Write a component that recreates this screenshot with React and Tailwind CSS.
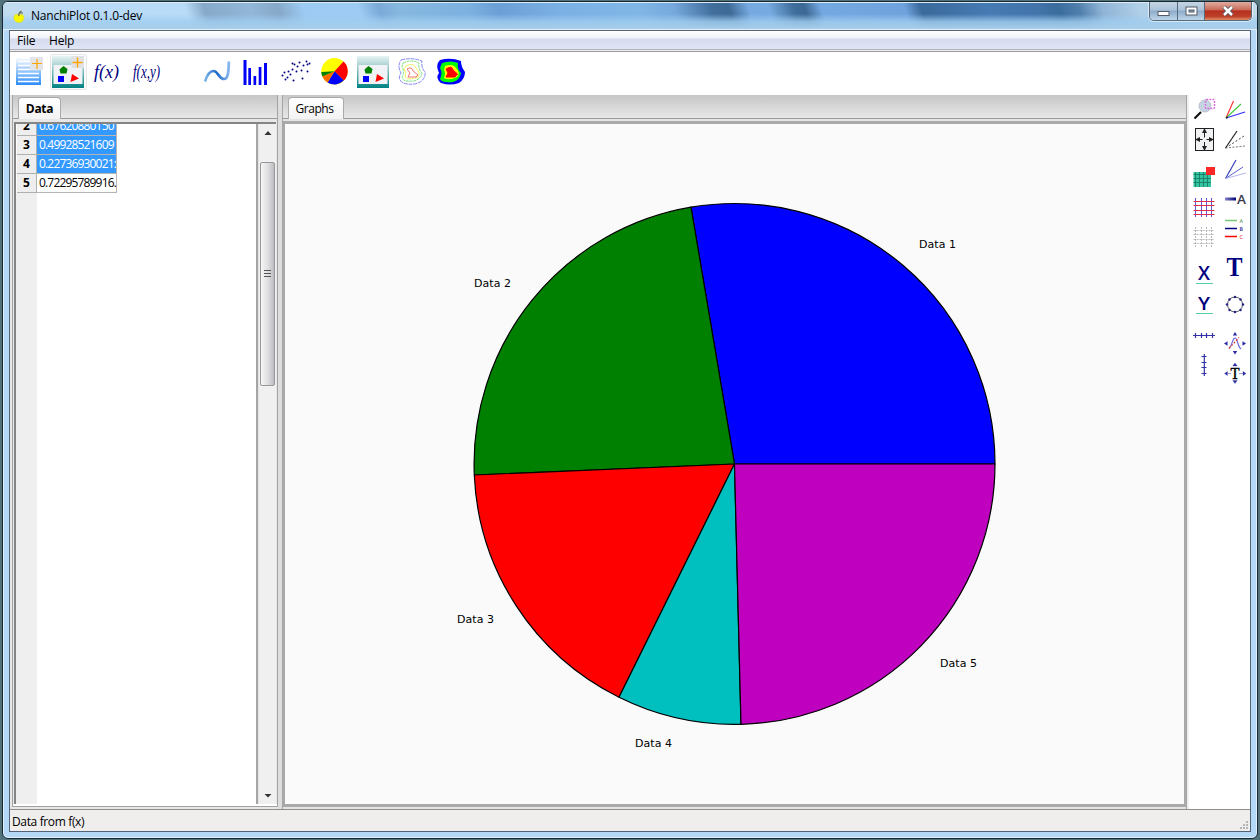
import React from 'react';

const uiFont = "font-['Open_Sans','Noto_Sans',sans-serif]";

/* Icons share one drawing space; x and y are the corner of each icon's view. */
function Icon({ x, y, w = 24, h = 24, className = '', children }) {
  return (
    <svg className={'block shrink-0 ' + className} width={w} height={h} viewBox={`${x} ${y} ${w} ${h}`}>
      {children}
    </svg>
  );
}

function ImageShapes({ x, y, plus }) {
  return (
    <g>
      <rect x={x} y={y} width="32" height="32" fill="url(#tealPic)" />
      <rect x={x + 1.5} y={y + 9} width="29" height="19" fill="#f0f2f5" />
      <path d={`M${x + 7.5} ${y + 13.5}l4 -3.5l4 3l-1 4.500h-6z`} fill="#008000" />
      <rect x={x + 6} y={y + 20} width="6" height="6" fill="#00f" />
      <path d={`M${x + 20} ${y + 18}l7 4.500l-8.500 3.500z`} fill="#f00" />
      {plus && (
        <g>
          <rect x={x + 19.500} y={y} width="12.500" height="12" fill="#dfe1e3" />
          <path d={`M${x + 25.500} ${y + 1.500}v10M${x + 20.500} ${y + 6.500}h10`} stroke="#ffa500" strokeWidth="1.400" />
        </g>
      )}
    </g>
  );
}

function Toolbar() {
  const dots = [[282, 75], [284, 72], [287, 77], [288, 71], [290, 74], [292, 69], [293, 80], [294, 64], [296, 71], [297, 66], [299, 62], [301, 70], [302, 78], [303, 65], [306, 61], [307, 71], [307, 64], [309, 63], [285, 79], [292, 63]];
  return (
    <div className="h-[43px] shrink-0 bg-white flex items-start pl-[3px] pt-[2px]">
      <Icon x={13} y={54} w={36} h={38}>
        <defs>
          <linearGradient id="sheetBlue" x1="0" y1="0" x2="0" y2="1"><stop stopColor="#f8fbff" /><stop offset="1" stopColor="#2b8cfa" /></linearGradient>
          <linearGradient id="tealPic" x1="0" y1="0" x2="0" y2="1"><stop stopColor="#e8f4f4" /><stop offset=".3" stopColor="#a9d1d1" /><stop offset="1" stopColor="#008282" /></linearGradient>
        </defs>
        <rect x="16" y="58" width="25" height="27" fill="url(#sheetBlue)" />
        <path d="M18 61.500h21M18 65.500h21M18 69.500h21M18 73.500h21M18 77.500h21M18 81.500h21" stroke="#fff" strokeWidth="1.300" />
        <rect x="30" y="57" width="13" height="13" fill="#e2e4e7" />
        <path d="M37 59v10M32 63.500h10" stroke="#ffa500" strokeWidth="1.200" />
      </Icon>
      <Icon x={49} y={54} w={39} h={38}>
        <rect x="50.500" y="54.500" width="36" height="35" rx="2" fill="#fafafa" stroke="#e5e5e5" />
        <ImageShapes x={52} y={56} plus />
      </Icon>
      <Icon x={88} y={54} w={39} h={38}>
        <text x="94" y="78" textLength="25" lengthAdjust="spacingAndGlyphs" fill="#000080" fontFamily="Liberation Serif, serif" fontStyle="italic" fontSize="19">f(x)</text>
      </Icon>
      <Icon x={127} y={54} w={73} h={38}>
        <text x="133" y="78" textLength="27" lengthAdjust="spacingAndGlyphs" fill="#000080" fontFamily="Liberation Serif, serif" fontStyle="italic" fontSize="19">f(x,y)</text>
      </Icon>
      <Icon x={200} y={54} w={37} h={38}>
        <defs><linearGradient id="wave"><stop stopColor="#7fb5e8" /><stop offset=".5" stopColor="#1b69cc" /><stop offset="1" stopColor="#86b6ed" /></linearGradient></defs>
        <path d="M205 81.500C207 75 210 71 213.500 71C218 71 219 79 224 79C228.500 79 228.800 70 228.800 61.500" fill="none" stroke="url(#wave)" strokeWidth="2.700" />
      </Icon>
      <Icon x={237} y={54} w={39} h={38}>
        <g fill="#0000f5"><rect x="243.500" y="60" width="3" height="25" /><rect x="248.300" y="68" width="2.700" height="17" /><rect x="253.500" y="76" width="2.700" height="9" /><rect x="258.700" y="67" width="2.700" height="18" /><rect x="264" y="63" width="3" height="22" /></g>
      </Icon>
      <Icon x={276} y={54} w={38} h={38}>
        {dots.map(([x, y]) => <circle key={x + '-' + y} cx={x + 0.5} cy={y + 0.5} r="1" fill="#000080" />)}
      </Icon>
      <Icon x={314} y={54} w={41} h={38}>
        <circle cx="334.500" cy="71.300" r="13.200" fill="#ff0" />
        <path d="M334.500 71.300L343.500 61.500A13.200 13.200 0 0 1 343.800 80.600z" fill="#f00" />
        <path d="M334.500 71.300L343.800 80.600A13.200 13.200 0 0 1 327.500 82.500z" fill="#00f" />
        <path d="M334.500 71.300L327.500 82.500A13.200 13.200 0 0 1 322.300 76.500z" fill="#ff6a00" />
        <path d="M334.500 71.300L322.300 76.500A13.200 13.200 0 0 1 321.300 72z" fill="#008000" />
      </Icon>
      <Icon x={355} y={54} w={40} h={38}><ImageShapes x={357} y={56} /></Icon>
      <Icon x={395} y={54} w={38} h={38}>
        <g fill="none" strokeWidth=".9">
          <path d="M401 60Q412 57 422 61Q421 68 425 72Q426 78 420 82Q413 86 403 83Q397 79 401 73Q397 66 401 60z" stroke="#7777f2" strokeDasharray="4 .8" />
          <path d="M403 63Q412 59 419 63Q418 69 422 73Q421 79 414 81Q402 82 402 77Q405 72 402 67z" stroke="#6ddd73" strokeDasharray="3 .7" />
          <path d="M406 66Q414 62 416 68Q421 73 418 77Q409 81 405 77Q407 72 404 69z" stroke="#f2ee54" />
          <path d="M407 69Q412 66 413 71L418 75L416 77L408 77L410 73z" stroke="#f06565" />
        </g>
      </Icon>
      <Icon x={433} y={54} w={38} h={38}>
        <path d="M440 60Q451 57 461 61Q461 67 465 72Q465 79 459 83Q450 86 441 83Q435 78 439 73Q435 65 440 60z" fill="#00f" />
        <path d="M442 63Q451 60 458 63Q457 69 461 73Q460 80 453 82Q442 83 440 79Q443 73 440 68z" fill="#0f0" />
        <path d="M445 66Q453 63 456 68Q461 73 457 77Q449 81 444 78Q446 73 444 70z" fill="#ff0" />
        <path d="M446 69Q452 65 453 70L457.500 74L455 77L446 77L448 73z" fill="#f00" stroke="#f00" />
      </Icon>
    </div>
  );
}

function DataTable() {
  const rows = [
    { n: 2, v: '0.67620880150', selected: true, height: 'h-[12px]', text: 'leading-[18px] -mt-[7px]' },
    { n: 3, v: '0.49928521609', selected: true, height: 'h-[19px]', text: 'leading-[18px]' },
    { n: 4, v: '0.22736930021:', selected: true, height: 'h-[19px]', text: 'leading-[18px]' },
    { n: 5, v: '0.72295789916.', selected: false, height: 'h-[19px]', text: 'leading-[18px]' },
  ];
  return (
    <div className="w-[240px] shrink-0 h-full bg-white flex flex-col overflow-hidden text-[12px]">
      {rows.map((r) => (
        <div key={r.n} className={'flex shrink-0 ' + r.height}>
          <div className="w-[20px] ml-px bg-[#eeeeee] border-r border-b border-[#b0b0b0] overflow-hidden text-center font-bold"><div className={r.text}>{r.n}</div></div>
          <div className={'w-[80px] border-r border-b border-[#b5b5b5] overflow-hidden pl-[2px] whitespace-nowrap ' + (r.selected ? 'bg-[#3399ff] text-white' : 'bg-white text-black')}>
            <div className={'tracking-[-0.83px] ' + r.text}>{r.v}</div>
          </div>
        </div>
      ))}
      <div className="w-[21px] flex-1 bg-[#efefef]" />
    </div>
  );
}

function Scrollbar() {
  return (
    <div className="w-[18px] shrink-0 h-full bg-[#f0f0f0] border-l border-[#e4e4e4] flex flex-col items-center">
      <svg width="16" height="38" className="block shrink-0"><path d="M4.500 11L8 7L11.500 11z" fill="#333" /></svg>
      <div className="w-[15px] h-[224px] shrink-0 rounded-[2px] border border-[#989898] bg-linear-to-r from-[#f6f6f6] via-[#e0e0e2] to-[#bdbec2] flex items-center justify-center">
        <svg className="-mt-[2px]" width="7" height="8"><path d="M0 1.500h7M0 4.500h7M0 7.500h7" stroke="#555" /></svg>
      </div>
      <div className="flex-1" />
      <svg width="16" height="14" className="block shrink-0"><path d="M4.500 4L11.500 4L8 7.500z" fill="#333" /></svg>
    </div>
  );
}

function PieChart() {
  const slices = [
    { end: [691, 207.2], start: [995, 464], color: '#0000ff' },
    { end: [474.300, 475], start: [691, 207.2], color: '#008000' },
    { end: [619, 697.200], start: [474.300, 475], color: '#ff0000' },
    { end: [741, 724.300], start: [619, 697.200], color: '#00bfbf' },
    { end: [995, 464], start: [741, 724.300], color: '#bf00bf' },
  ];
  const labels = [['Data 1', 919, 248], ['Data 2', 474, 287], ['Data 3', 457, 623], ['Data 4', 635, 747], ['Data 5', 940, 667]];
  return (
    <svg className="block" width="899" height="680" viewBox="285 124 899 680">
      {slices.map((s) => (
        <path key={s.color} d={`M734.500 464L${s.start[0]} ${s.start[1]}A260.500 260.500 0 0 0 ${s.end[0]} ${s.end[1]}z`} fill={s.color} stroke="#000" strokeWidth="1.200" strokeLinejoin="round" />
      ))}
      {labels.map(([t, x, y]) => <text key={t} x={x} y={y} fontFamily="DejaVu Sans, sans-serif" fontSize="11" textLength="37">{t}</text>)}
    </svg>
  );
}

function SideTools() {
  return (
    <div className="flex-1 flex pl-[3px]">
      <div className="w-[24px] flex flex-col mr-[7px]">
        <Icon x={1192} y={97} className="mt-[2px]">
          <circle cx="1205" cy="106" r="6" fill="#c5d3e2" stroke="#b9c2cc" />
          <path d="M1194.500 118.500L1201 112" stroke="#111" strokeWidth="2.200" />
          <rect x="1205.500" y="99.500" width="9" height="9" rx="1" fill="none" stroke="#d968dc" strokeWidth="1.400" strokeDasharray="1.800 1.200" />
        </Icon>
        <Icon x={1192} y={127} className="mt-[6px]">
          <rect x="1195.500" y="128.500" width="18" height="22" fill="#f0f2f4" stroke="#222" />
          <path d="M1204.500 129.500v8M1204.500 142v8M1196.500 139.500h6M1206.500 139.500h6" stroke="#222" />
          <path d="M1204.500 128l2.500 5h-5zM1204.500 151l2.500-5h-5zM1195 139.500l5-2.500v5zM1214 139.500l-5-2.500v5z" fill="#222" />
        </Icon>
        <Icon x={1192} y={165} className="mt-[14px]">
          <rect x="1193.500" y="172" width="17.500" height="15" fill="#33c4a0" />
          <path d="M1195.500 172v15M1199.500 172v15M1203.500 172v15M1207.500 172v15M1193.500 174.500h17.500M1193.500 178.500h17.500M1193.500 182.500h17.500" stroke="#16755f" strokeWidth=".8" />
          <rect x="1206" y="167" width="9" height="8" fill="#ff2828" />
        </Icon>
        <Icon x={1192} y={195} className="mt-[6px]">
          <path d="M1195.500 198v19M1201.500 198v19M1206.500 198v19M1211.500 198v19" stroke="#5a5ad8" />
          <path d="M1193.500 201.500h21M1193.500 205.500h21M1193.500 210.500h21M1193.500 214.500h21" stroke="#e0304f" strokeWidth="1.200" />
        </Icon>
        <Icon x={1192} y={225} className="mt-[6px]">
          <path d="M1195.500 227v20M1201.500 227v20M1206.500 227v20M1211.500 227v20M1193.500 230.500h21M1193.500 234.500h21M1193.500 239.500h21M1193.500 243.500h21" stroke="#aaa" strokeDasharray="2 1" strokeWidth=".8" />
        </Icon>
        <Icon x={1192} y={261} className="mt-[12px]">
          <text x="1198" y="280" fontFamily="Open Sans, sans-serif" fontWeight="600" fontSize="19" textLength="12" lengthAdjust="spacingAndGlyphs" fill="#000080">X</text>
          <path d="M1196 283.500h17" stroke="#56cba6" />
        </Icon>
        <Icon x={1192} y={292} h={26} className="mt-[7px] -mb-[2px]">
          <text x="1198" y="310" fontFamily="Open Sans, sans-serif" fontWeight="600" fontSize="18" textLength="12" lengthAdjust="spacingAndGlyphs" fill="#000080">Y</text>
          <path d="M1196 313.500h17" stroke="#56cba6" />
        </Icon>
        <Icon x={1192} y={324} className="mt-[8px]">
          <path d="M1193 335.500h22M1195.500 333v5M1201.500 333v5M1206.500 333v5M1212.500 333v5" stroke="#3333a5" strokeWidth="1.200" />
        </Icon>
        <Icon x={1192} y={353} className="mt-[5px]">
          <path d="M1204.300 354v22M1201.500 356.500h5M1201.500 362.500h5M1201.500 367.500h5M1201.500 373.500h5" stroke="#3333a5" strokeWidth="1.200" />
        </Icon>
      </div>
      <div className="w-[24px] flex flex-col">
        <Icon x={1223} y={97} className="mt-[2px]">
          <path d="M1226 118L1233.500 101" stroke="#f33" strokeWidth="1.200" /><path d="M1226 118L1241 104" stroke="#4c4" strokeWidth="1.200" /><path d="M1226 118L1245 112" stroke="#33f" strokeWidth="1.200" />
          <circle cx="1227" cy="117.500" r="1" fill="#222" />
        </Icon>
        <Icon x={1223} y={127} className="mt-[6px]">
          <path d="M1225.500 148L1237 131" stroke="#222" strokeWidth="1.200" /><path d="M1225.500 148L1244 136" stroke="#444" strokeDasharray="2 2" /><path d="M1225.500 148L1245 146" stroke="#777" strokeDasharray="2 1.500" />
        </Icon>
        <Icon x={1223} y={158} className="mt-[7px]">
          <path d="M1225.500 178.500L1236 160" stroke="#3340bd" strokeWidth="1.200" /><path d="M1225.500 178.500L1243 167" stroke="#555bd0" /><path d="M1225.500 178.500L1246 173" stroke="#b5b5ed" />
        </Icon>
        <Icon x={1223} y={188} className="mt-[6px]">
          <defs><linearGradient id="lineFade"><stop stopColor="#8484cf" /><stop offset="1" stopColor="#000075" /></linearGradient></defs>
          <rect x="1225" y="197.500" width="11" height="3" fill="url(#lineFade)" />
          <text x="1237" y="204" fontFamily="Open Sans, sans-serif" fontWeight="600" fontSize="13" textLength="9" lengthAdjust="spacingAndGlyphs" fill="#3b3b4d">A</text>
        </Icon>
        <Icon x={1223} y={217} className="mt-[5px]">
          <path d="M1225 220.500h12" stroke="#7ac67a" strokeWidth="1.400" /><path d="M1225 228.500h12" stroke="#000080" strokeWidth="1.400" /><path d="M1225 236.500h12" stroke="#f00" strokeWidth="1.400" />
          <g fontFamily="DejaVu Sans, sans-serif" fontSize="5"><text x="1239.500" y="222.500" fill="#338433">A</text><text x="1239.500" y="230.500" fill="#000080">B</text><text x="1239.500" y="238.500" fill="#d00">C</text></g>
        </Icon>
        <Icon x={1223} y={255} className="mt-[14px]">
          <text x="1226.500" y="276" fontFamily="Liberation Serif, serif" fontWeight="bold" fontSize="27" textLength="16" lengthAdjust="spacingAndGlyphs" fill="#000080">T</text>
        </Icon>
        <Icon x={1223} y={292} className="mt-[13px]">
          <circle cx="1235" cy="304.500" r="7.500" fill="none" stroke="#445" strokeWidth=".9" />
          <g fill="#202080">{[[1235, 297], [1240.500, 299.500], [1243, 304.500], [1240.500, 310], [1235, 312], [1229.500, 310], [1227, 304.500], [1229.500, 299.500]].map(([x, y]) => <circle key={`${x}-${y}`} cx={x} cy={y} r="1.200" />)}</g>
        </Icon>
        <Icon x={1223} y={331} className="mt-[15px]">
          <path d="M1235 332l2.200 3.500h-4.400zM1235 354.500l2.200-3.500h-4.400zM1224 343.500l3.500-2.200v4.400zM1246 343.500l-3.500-2.200v4.400z" fill="#2929a4" />
          <path d="M1229 348.500C1233 345 1232 338 1235 338S1237 346 1241 349" fill="none" stroke="#6c6cdc" strokeWidth="1.200" />
          <path d="M1229 348.500L1239 337.500" stroke="#e43842" strokeWidth="1.200" strokeDasharray="2 1.500" />
        </Icon>
        <Icon x={1223} y={361} className="mt-[6px]">
          <path d="M1235 363l2.200 3h-4.400zM1235 383.500l2.200-3h-4.400zM1224.500 373.500l3-2v4zM1246 373.500l-3-2v4z" fill="#2929a4" stroke="#2929a4" strokeWidth=".3" />
          <path d="M1227 373.500h4M1239 373.500h4" stroke="#8585c8" strokeWidth=".8" />
          <text x="1230.500" y="379" fontFamily="Liberation Serif, serif" fontSize="17" stroke="#000" strokeWidth=".5" textLength="9" lengthAdjust="spacingAndGlyphs">T</text>
        </Icon>
      </div>
    </div>
  );
}

function TitleBar() {
  return (
    <div className="h-[28px] shrink-0 flex items-start pl-[9px] bg-[linear-gradient(72deg,#c3dcee_0px,#b9daf8_90px,#b8dcf8_180px,#86a9c9_198px,#92b7d8_242px,#86a8c8_268px,#9ccaf2_292px,#9dcbf3_345px,#7ba9d8_364px,#86b8df_383px,#7cb0df_450px,#6b9fd6_478px,#7bb0e4_535px,#80b6e6_611px,#76a8dc_645px,#426f9d_680px,#3d6996_697px,#76a9e0_716px,#77aae0_735px,#41709e_758px,#3b6794_769px,#74a8e0_785px,#70a3dd_864px,#3b6a9c_880px,#467ab2_944px,#4274aa_992px,#3a6c9c_1010px,#507fac_1030px,#90b4d6_1052px,#b0cfe8_1088px,#c4dcea_1190px)] relative">
      <div className="absolute inset-x-0 bottom-0 h-[16px] bg-linear-to-b from-transparent via-[#9fcdf0cc] to-[#a9cde8] border-b border-[#e4f0f8]" />
      <div className="absolute inset-x-0 top-0 h-px bg-[#ddeefa]" />
      <svg className="relative mt-[7px] mr-[5px]" width="14" height="15" viewBox="0 0 14 15"><path d="M3.500 5.500Q6 5 7 6Q11.500 4.500 12 8.500Q11.500 13.500 7 13.500Q2 13 1.800 9Q2 6 3.500 5.500z" fill="#f7f500" stroke="#d9d930" strokeWidth=".5" /><path d="M7 7Q6 4 9.500 2M7.500 4h3.500" fill="none" stroke="#666945" strokeWidth="1.200" /></svg>
      <span className="relative text-[12px] leading-[16px] mt-[6px] tracking-[-0.19px] whitespace-nowrap">NanchiPlot 0.1.0-dev</span>
      <div className="relative ml-auto mr-[5px] flex h-[19px] rounded-b-[5px] border border-t-0 border-[#536b7c] overflow-hidden shadow-[0_0_0_1px_#ffffff88]">
        <div className="w-[28px] border-r border-[#536b7c] bg-[linear-gradient(#c5d5e3_0%,#acc3d9_45%,#8eabc9_50%,#bdd5e9_100%)] flex items-center justify-center"><svg className="mt-[3px]" width="13" height="10"><rect x="1" y="3.500" width="11" height="4" fill="#fff" stroke="#535c68" /></svg></div>
        <div className="w-[27px] border-r border-[#536b7c] bg-[linear-gradient(#c5d5e3_0%,#acc3d9_45%,#8eabc9_50%,#bdd5e9_100%)] flex items-center justify-center"><svg width="13" height="11"><rect x="1" y="1" width="11" height="8" fill="#fff" stroke="#535c68" /><rect x="4" y="4" width="5" height="2" fill="#8fa7bc" stroke="#535c68" /></svg></div>
        <div className="w-[46px] bg-[linear-gradient(#dfada0_0%,#cb6d5c_42%,#b5301e_50%,#bd4028_80%,#e18e67_100%)] flex items-center justify-center"><svg width="14" height="12"><path d="M3 2L11 10M11 2L3 10" stroke="#5a5361" strokeWidth="4.500" /><path d="M3 2L11 10M11 2L3 10" stroke="#fff" strokeWidth="2.500" /></svg></div>
      </div>
    </div>
  );
}

export default function App() {
  return (
    <div className={'w-[1260px] h-[840px] overflow-hidden bg-[#53737b] pt-px pl-[2px] pr-[2px] text-black ' + uiFont}>
      <div className="w-[1256px] h-[838px] rounded-[6px] border border-[#172631] bg-[#b5d8f7] shadow-[inset_0_0_0_1px_#e1f2ff] overflow-hidden flex flex-col">
        <TitleBar />
        <div className="mx-[6px] h-[802px] shrink-0 border border-[#516374] flex flex-col bg-white">
          <div className="h-[21px] shrink-0 bg-[linear-gradient(#ffffff_0px,#edf1f8_7px,#d4dbed_8px,#e1e6f6_18px,#b0b0b8_18px,#b0b0b8_19px,#f0f0f0_19px,#f0f0f0_20px,#999999_20px)] flex text-[12px] leading-[20px]">
            <span className="ml-[7px] w-[32px] tracking-[-0.15px]">File</span><span className="tracking-[-0.2px]">Help</span>
          </div>
          <Toolbar />
          <div className="h-[714px] shrink-0 flex bg-[#e7e7e7] pl-[2px]">
            <div className="w-[266px] h-[712px] shrink-0 flex flex-col border-x border-b border-[#a3a3a3]">
              <div className="h-[24px] shrink-0 bg-linear-to-b from-[#c6c6c6] to-[#e8e8e8] border-b border-[#999] flex items-end pl-[5px]">
                <div className="w-[43px] h-[22px] -mb-px rounded-t-[4px] border border-b-0 border-[#aaa] bg-linear-to-b from-white to-[#f3f3f3] text-center text-[12px] leading-[22px] font-bold tracking-[-0.3px]">Data</div>
              </div>
              <div className="h-[682px] mt-[3px] mx-[1px] border-l-[2px] border-t-[2px] border-[#858585] bg-white flex shrink-0">
                <DataTable />
                <div className="w-[2px] h-full bg-[#a5a5a5]" />
                <Scrollbar />
              </div>
              <div className="flex-1 bg-white" />
            </div>
            <div className="w-[4px] shrink-0 bg-[#dedede]" />
            <div className="w-[905px] shrink-0 flex flex-col border-x border-[#a5a5a5] bg-[#e4e4e4]">
              <div className="h-[24px] shrink-0 bg-linear-to-b from-[#c6c6c6] to-[#e8e8e8] border-b border-[#999] flex items-end pl-[5px]">
                <div className="w-[56px] h-[22px] -mb-px rounded-t-[4px] border border-b-0 border-[#aaa] bg-linear-to-b from-white to-[#f3f3f3] text-center text-[12px] leading-[22px] tracking-[-0.45px] pr-[3px]">Graphs</div>
              </div>
              <div className="mt-[2px] h-[686px] w-[903px] border-x-[2px] border-y-[3px] border-[#a8aaa9] bg-[#fafafa]"><PieChart /></div>
            </div>
            <div className="w-[2px] shrink-0 bg-[#f0f0f0]" />
            <div className="flex-1 bg-white flex"><SideTools /></div>
          </div>
          <div className="h-[22px] shrink-0 border-t border-[#8e8e8e] bg-[#f0eded] flex text-[12px] leading-[24px] pl-[2px]">
            <span className="tracking-[-0.36px]">Data from f(x)</span>
            <svg className="ml-auto mt-[10px]" width="12" height="11"><g fill="#b5b5b5"><rect x="8" y="1" width="2" height="2" /><rect x="5" y="4" width="2" height="2" /><rect x="8" y="4" width="2" height="2" /><rect x="2" y="7" width="2" height="2" /><rect x="5" y="7" width="2" height="2" /><rect x="8" y="7" width="2" height="2" /></g></svg>
          </div>
        </div>
      </div>
    </div>
  );
}
